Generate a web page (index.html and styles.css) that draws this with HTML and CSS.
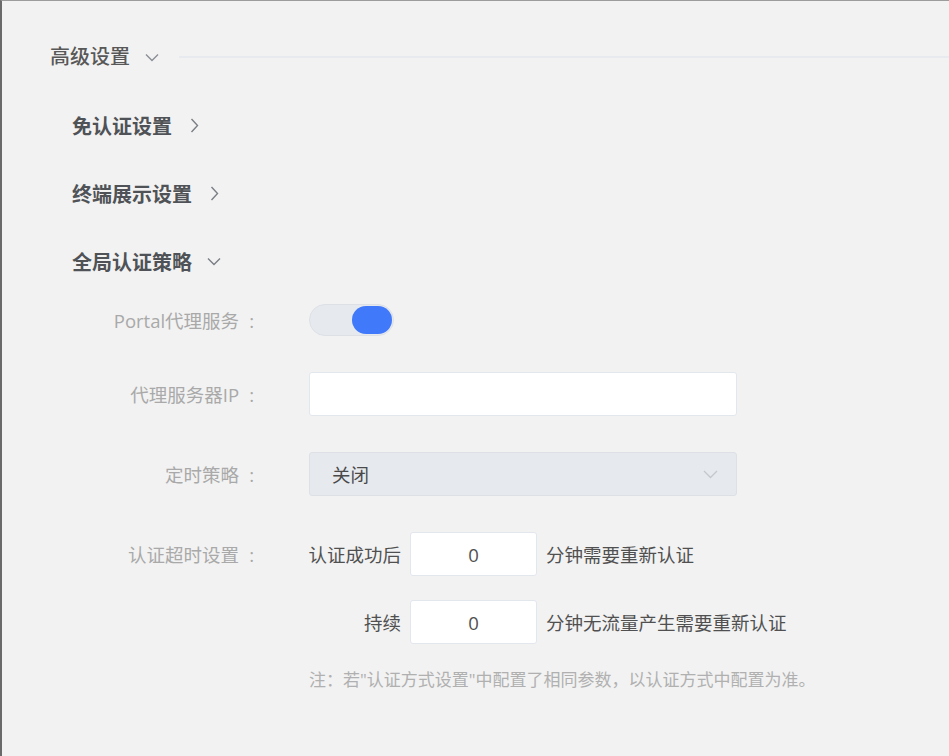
FILE: index.html
```html
<!DOCTYPE html>
<html lang="zh-CN">
<head>
<meta charset="utf-8">
<title>高级设置</title>
<link rel="stylesheet" href="styles.css">
</head>
<body>
<div class="panel">
  <div class="adv-head">
    <span class="adv-title">高级设置</span>
    <svg class="chev-down" width="14" height="9" viewBox="0 0 14 9"><path d="M1 1.5 L7 7.5 L13 1.5" fill="none" stroke="#8a8f96" stroke-width="1.4"/></svg>
    <span class="adv-line"></span>
  </div>

  <div class="subs">
    <div class="sub-row">
      <span class="sub-title">免认证设置</span>
      <svg class="chev-right" width="9" height="15" viewBox="0 0 9 15"><path d="M1.5 1 L7.5 7.5 L1.5 14" fill="none" stroke="#7a7f86" stroke-width="1.4"/></svg>
    </div>
    <div class="sub-row">
      <span class="sub-title">终端展示设置</span>
      <svg class="chev-right" width="9" height="15" viewBox="0 0 9 15"><path d="M1.5 1 L7.5 7.5 L1.5 14" fill="none" stroke="#7a7f86" stroke-width="1.4"/></svg>
    </div>
    <div class="sub-row">
      <span class="sub-title">全局认证策略</span>
      <svg class="chev-down sub-chev" width="14" height="9" viewBox="0 0 14 9"><path d="M1 1.5 L7 7.5 L13 1.5" fill="none" stroke="#7a7f86" stroke-width="1.4"/></svg>
    </div>
  </div>

  <div class="form">
    <div class="form-row row-switch">
      <label class="form-label">Portal代理服务<span class="colon">:</span></label>
      <div class="control">
        <div class="switch"><span class="knob"></span></div>
      </div>
    </div>
    <div class="form-row row-gap">
      <label class="form-label">代理服务器IP<span class="colon">:</span></label>
      <div class="control">
        <div class="input wide"></div>
      </div>
    </div>
    <div class="form-row row-gap">
      <label class="form-label">定时策略<span class="colon">:</span></label>
      <div class="control">
        <div class="select wide">
          <span>关闭</span>
          <svg width="15" height="9" viewBox="0 0 15 9"><path d="M1 1 L7.5 7.5 L14 1" fill="none" stroke="#c4c8ce" stroke-width="1.3"/></svg>
        </div>
      </div>
    </div>
    <div class="form-row row-gap">
      <label class="form-label">认证超时设置<span class="colon">:</span></label>
      <div class="control">
        <div class="timeout">
          <span class="pre">认证成功后</span>
          <div class="input num">0</div>
          <span class="post">分钟需要重新认证</span>
        </div>
      </div>
    </div>
    <div class="form-row row-gap2">
      <span class="form-label"></span>
      <div class="control">
        <div class="timeout">
          <span class="pre">持续</span>
          <div class="input num">0</div>
          <span class="post">分钟无流量产生需要重新认证</span>
        </div>
      </div>
    </div>
    <div class="form-row note-row">
      <span class="form-label"></span>
      <div class="control note">注：若"认证方式设置"中配置了相同参数，以认证方式中配置为准。</div>
    </div>
  </div>
</div>
</body>
</html>
```

FILE: styles.css
```css
html, body {
  margin: 0;
  padding: 0;
  background: #f2f2f2;
}

body {
  font-family: "Open Sans", "Noto Sans CJK SC", sans-serif;
  color: #4d4d4d;
}

.panel {
  box-sizing: border-box;
  height: 756px;
  border-top: 1px solid #9c9c9c;
  border-left: 2px solid #6a6a6a;
  padding: 36px 0 0 48px;
  background: #f2f2f2;
}

.adv-head {
  display: flex;
  align-items: center;
  height: 40px;
}

.adv-title {
  font-size: 20px;
  color: #585858;
  font-weight: 500;
  line-height: 40px;
}

.adv-head .chev-down {
  margin-left: 15px;
  margin-top: 1px;
}

.adv-line {
  flex: 1;
  height: 2px;
  background: #e7ebef;
  margin-left: 20px;
}

.subs {
  margin-top: 14px;
}

.sub-row {
  display: flex;
  align-items: center;
  height: 68px;
  padding-left: 22px;
}

.sub-title {
  font-size: 20px;
  font-weight: 700;
  color: #4f5256;
}

.chev-right {
  margin-left: 18px;
}

.sub-chev {
  margin-left: 15px;
}

.form {
  margin-top: 9px;
}

.form-row {
  display: flex;
  align-items: center;
}

.form-label {
  width: 204px;
  flex: none;
  text-align: right;
  font-size: 18.5px;
  color: #a9a9a9;
  padding-right: 55px;
  box-sizing: content-box;
  white-space: nowrap;
}

.colon {
  margin-left: 10px;
}

.row-gap { margin-top: 36px; }
.row-gap2 { margin-top: 24px; }

.control {
  display: flex;
  align-items: center;
}

.switch {
  box-sizing: border-box;
  width: 85px;
  height: 32px;
  border-radius: 16px;
  background: #e6eaee;
  border: 1px solid #dde1e6;
  display: flex;
  justify-content: flex-end;
  align-items: center;
  padding-right: 1px;
}

.knob {
  width: 40px;
  height: 28px;
  border-radius: 14px;
  background: #4179fb;
}

.input {
  box-sizing: border-box;
  height: 44px;
  background: #ffffff;
  border: 1px solid #e2e7ee;
  border-radius: 3px;
}

.wide { width: 428px; }

.select {
  box-sizing: border-box;
  height: 44px;
  background: #e6e9ee;
  border: 1px solid #dde1e6;
  border-radius: 3px;
  display: flex;
  align-items: center;
  justify-content: space-between;
  padding: 0 18px 0 22px;
  font-size: 18.5px;
  color: #4a4a4a;
}

.timeout {
  display: flex;
  align-items: center;
  font-size: 18.5px;
  color: #505050;
  white-space: nowrap;
}

.timeout .pre {
  width: 92px;
  flex: none;
  display: flex;
  justify-content: flex-end;
  margin-right: 9px;
}

.num {
  width: 127px;
  flex: none;
  display: flex;
  align-items: center;
  justify-content: center;
  font-size: 18.5px;
  color: #505050;
}

.timeout .post {
  margin-left: 9px;
}

.note-row {
  margin-top: 22px;
}

.note {
  font-size: 17px;
  color: #b0b0b0;
  white-space: nowrap;
}
```
